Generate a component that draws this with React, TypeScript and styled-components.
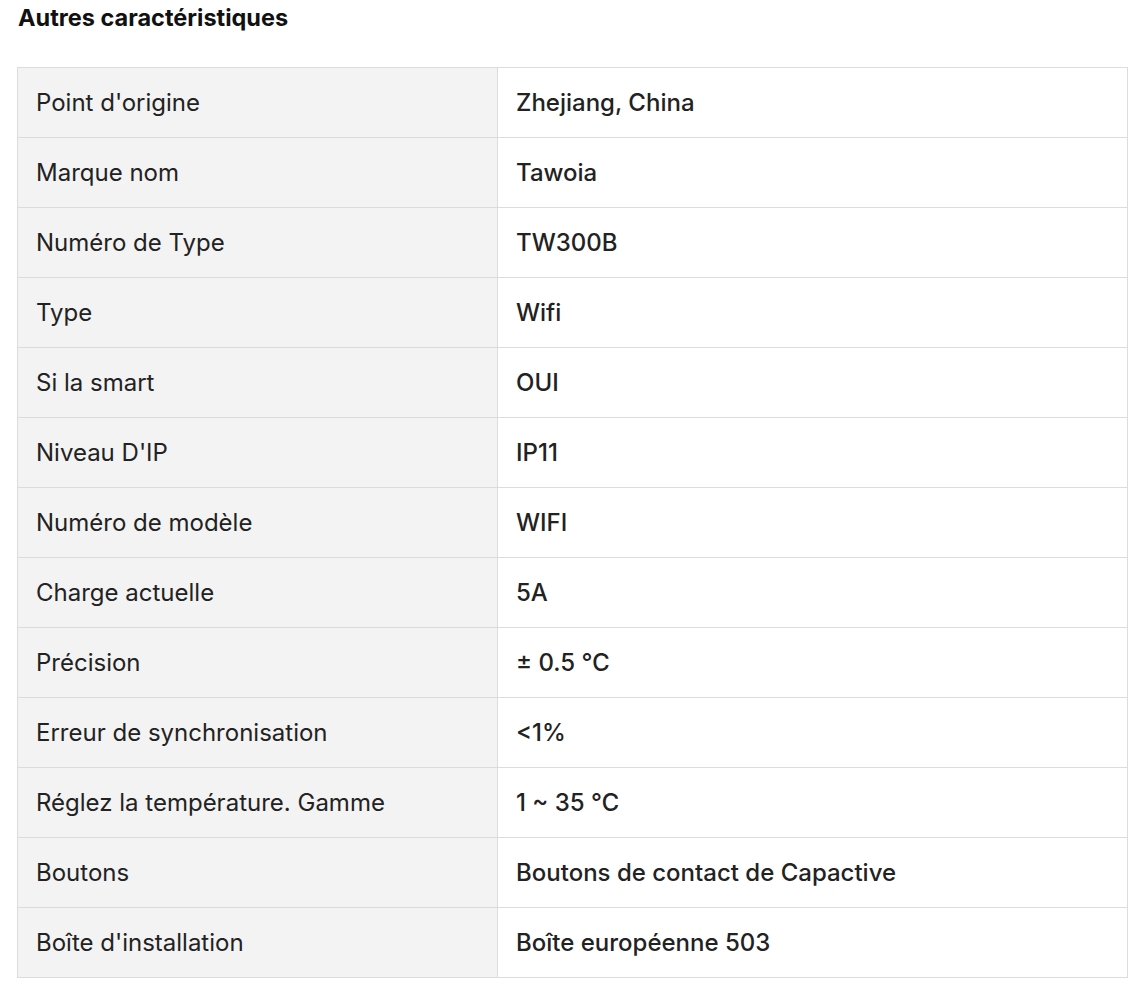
import React from "react";
import styled, { createGlobalStyle } from "styled-components";

const Global = createGlobalStyle`
  html, body { margin: 0; padding: 0; background: #fff; }
  body { font-family: Inter, "Noto Sans", sans-serif; color: #222; }
`;

const Page = styled.div`
  padding: 4px 18px 0 17px;
`;

const Title = styled.h2`
  margin: 0 0 35px 1px;
  font-size: 23.5px;
  line-height: 28px;
  font-weight: 700;
  color: #111;
`;

const Table = styled.table`
  width: 1111px;
  border-collapse: collapse;
  table-layout: fixed;
`;

const Row = styled.tr`
  height: 70px;
`;

const Cell = styled.td<{ $label?: boolean }>`
  border: 1px solid #dcdcdc;
  padding: 0 20px 0 18px;
  font-size: 24px;
  line-height: 28px;
  vertical-align: middle;
  background: ${(p) => (p.$label ? "#f3f3f3" : "#fff")};
  font-weight: ${(p) => (p.$label ? 400 : 500)};
  color: #222;
  width: ${(p) => (p.$label ? "441px" : "auto")};
`;

const rows: [string, string][] = [
  ["Point d'origine", "Zhejiang, China"],
  ["Marque nom", "Tawoia"],
  ["Numéro de Type", "TW300B"],
  ["Type", "Wifi"],
  ["Si la smart", "OUI"],
  ["Niveau D'IP", "IP11"],
  ["Numéro de modèle", "WIFI"],
  ["Charge actuelle", "5A"],
  ["Précision", "± 0.5 ℃"],
  ["Erreur de synchronisation", "<1%"],
  ["Réglez la température. Gamme", "1 ~ 35 ℃"],
  ["Boutons", "Boutons de contact de Capactive"],
  ["Boîte d'installation", "Boîte européenne 503"],
];

export default function App() {
  return (
    <Page>
      <Global />
      <Title>Autres caractéristiques</Title>
      <Table>
        <tbody>
          {rows.map(([k, v]) => (
            <Row key={k}>
              <Cell $label>{k}</Cell>
              <Cell>{v}</Cell>
            </Row>
          ))}
        </tbody>
      </Table>
    </Page>
  );
}
